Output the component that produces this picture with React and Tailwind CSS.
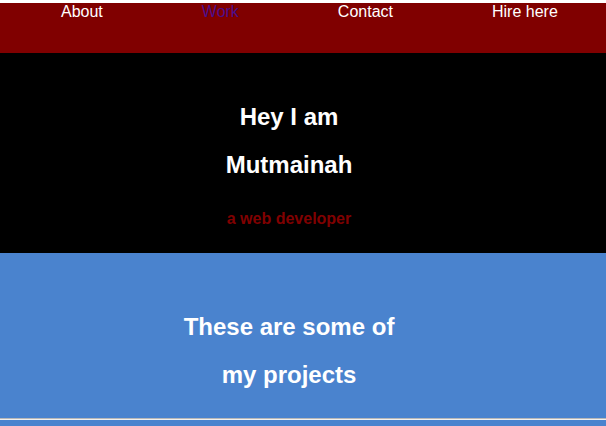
import React from 'react';

const links = ['About', 'Work', 'Contact', 'Hire here'];

const App = () => {
    return (
        <div className="min-h-screen bg-[#4a83ce] font-['Liberation_Sans',Arial,sans-serif]">
            <div className="bg-white pt-[3px]">
                <nav className="h-[50px] bg-[#800000]">
                    <ul className="flex gap-[99px] pl-[61px] text-[16px] leading-[18px]">
                        {links.map(link => (
                            <li key={link}>
                                <a href="#" className={link === 'Work' ? 'text-[#4b0f8c]' : 'text-white'}>{link}</a>
                            </li>
                        ))}
                    </ul>
                </nav>
            </div>
            <section className="h-[200px] bg-black pt-[50px] pr-[28px] text-center">
                <h2 className="text-[24px] leading-[28px] font-bold text-white">Hey I am</h2>
                <h2 className="mt-[20px] text-[24px] leading-[28px] font-bold text-white">Mutmainah</h2>
                <p className="mt-[31px] text-[16px] leading-[18px] font-bold text-[#800000]">a web developer</p>
            </section>
            <section className="h-[165px] bg-[#4a83ce] pt-[60px] pr-[28px] text-center">
                <h2 className="text-[24px] leading-[28px] font-bold text-white">These are some of</h2>
                <h2 className="mt-[20px] text-[24px] leading-[28px] font-bold text-white">my projects</h2>
            </section>
            <hr className="border-0 border-t border-b border-t-[#b8b8b8] border-b-[#f0f0f0]" />
        </div>
    );
};

export default App;
